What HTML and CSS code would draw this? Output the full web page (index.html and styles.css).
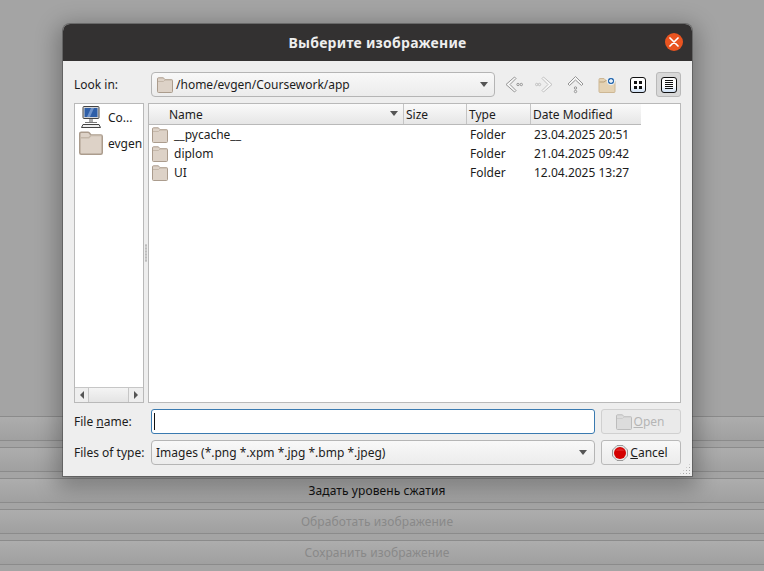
FILE: index.html
```html
<!DOCTYPE html>
<html lang="ru">
<head>
<meta charset="utf-8">
<title>Выберите изображение</title>
<link rel="stylesheet" href="styles.css">
</head>
<body>
<svg class="defs" width="0" height="0">
  <defs>
    <symbol id="folder" viewBox="0 0 16 16">
      <path d="M.5 3V14.500a1 1 0 0 0 1 1h13a1 1 0 0 0 1-1V3.600a1 1 0 0 0-1-1H8L6.800 1.200a1 1 0 0 0-.8-.4H1.500a1 1 0 0 0-1 1z" fill="#ddd2c7" stroke="#ab9c8d"/>
      <path d="M1 4.500H6.500L8 3h7" fill="none" stroke="#c4b7a9"/>
    </symbol>
  </defs>
</svg>
<main class="app">
  <div class="app-top"></div>
  <div class="app-btn"></div>
  <div class="app-btn"></div>
  <div class="app-btn active">Задать уровень сжатия</div>
  <div class="app-btn">Обработать изображение</div>
  <div class="app-btn">Сохранить изображение</div>
</main>
<section class="dialog">
  <header class="titlebar">
    <span class="title">Выберите изображение</span>
    <span class="close"><svg width="10" height="10" viewBox="0 0 10 10"><path d="M1 1l8 8M9 1l-8 8" stroke="#fff" stroke-width="1.700" stroke-linecap="round"/></svg></span>
  </header>
  <div class="body">
    <div class="row toolbar">
      <label class="lbl lookin">Look in:</label>
      <div class="combo path">
        <svg class="ico16" width="16" height="16"><use href="#folder"/></svg>
        <span class="combo-text">/home/evgen/Coursework/app</span>
        <span class="arrow"></span>
      </div>
      <div class="tools">
        <span class="tool"><svg width="20" height="20" viewBox="0 0 20 20" fill="none" stroke="#959595"><path d="M10.500 2L2 9.500l8.500 7.500 1.500-1.500L6 9.500l6-6z" fill="#f6f6f6"/><circle cx="14" cy="9.500" r="1.200"/><circle cx="17.300" cy="9.500" r="1.200"/></svg></span>
        <span class="tool"><svg width="20" height="20" viewBox="0 0 20 20" fill="none" stroke="#c0c0c0"><path d="M8.500 2L17 9.500 8.500 17 7 15.500l6-6-6-6z" fill="#f6f6f6"/><circle cx="4.500" cy="9.500" r="1.200"/><circle cx="1.700" cy="9.500" r="1.200"/></svg></span>
        <span class="tool"><svg width="20" height="20" viewBox="0 0 20 20" fill="none" stroke="#959595"><path d="M2 9L9.500 1.500 17 9l-1.500 1.500-6-5.500-6 5.500z" fill="#f6f6f6"/><circle cx="9.500" cy="13" r="1.200"/><circle cx="9.500" cy="16.500" r="1.200"/></svg></span>
        <span class="tool"><svg width="18" height="18" viewBox="0 0 18 18"><path d="M1 3.500a1 1 0 0 1 1-1h4l2 2h8a1 1 0 0 1 1 1v10a1 1 0 0 1-1 1h-14a1 1 0 0 1-1-1z" fill="#e4d2b3" stroke="#cdb794"/><path d="M1.500 6h4.500l2-1.500" fill="none" stroke="#b79f78"/><circle cx="13" cy="5" r="3.800" fill="#2b6cb0" stroke="#fff"/><path d="M13 3v4M11 5h4" stroke="#fff" stroke-width="1.300"/></svg></span>
        <span class="tool"><span class="view"><i></i><i></i><i></i><i></i></span></span>
        <span class="tool on"><span class="view list"><b></b><b></b><b></b><b></b><b></b></span></span>
      </div>
    </div>
    <div class="panes">
      <aside class="side">
        <div class="side-list">
          <div class="side-item">
            <svg width="24" height="24" viewBox="0 0 24 24"><rect x="4" y="1.500" width="16" height="12" rx="1" fill="#d6d6d6" stroke="#444"/><rect x="5.500" y="3" width="13" height="9" fill="#2f5fa8"/><path d="M8 12l4-9h3l-4 9z" fill="#6f94cc"/><rect x="10" y="14" width="4" height="3" fill="#aaa"/><rect x="6" y="17" width="12" height="1" fill="#777"/><path d="M2.500 22.500l1.500-3h16l1.500 3z" fill="#eee" stroke="#444"/></svg>
            <span>Co...</span>
          </div>
          <div class="side-item">
            <svg width="24" height="24"><use href="#folder"/></svg>
            <span>evgen</span>
          </div>
        </div>
        <div class="hscroll">
          <span class="sbtn"><em class="tri-l"></em></span>
          <span class="strack"></span>
          <span class="sbtn"><em class="tri-r"></em></span>
        </div>
      </aside>
      <div class="splitter"><span class="dots"></span></div>
      <div class="files">
        <div class="thead">
          <span class="th c-name">Name<em class="sort"></em></span>
          <span class="th c-size">Size</span>
          <span class="th c-type">Type</span>
          <span class="th c-date">Date Modified</span>
        </div>
        <div class="tr"><span class="c-name td"><svg width="16" height="16"><use href="#folder"/></svg>__pycache__</span><span class="c-size"></span><span class="c-type td">Folder</span><span class="c-date td">23.04.2025 20:51</span></div>
        <div class="tr"><span class="c-name td"><svg width="16" height="16"><use href="#folder"/></svg>diplom</span><span class="c-size"></span><span class="c-type td">Folder</span><span class="c-date td">21.04.2025 09:42</span></div>
        <div class="tr"><span class="c-name td"><svg width="16" height="16"><use href="#folder"/></svg>UI</span><span class="c-size"></span><span class="c-type td">Folder</span><span class="c-date td">12.04.2025 13:27</span></div>
      </div>
    </div>
    <div class="row r-name">
      <label class="lbl">File <u>n</u>ame:</label>
      <div class="input"><span class="caret"></span></div>
      <button class="btn disabled"><svg width="16" height="16"><use href="#folder"/></svg><span><u>O</u>pen</span></button>
    </div>
    <div class="row r-type">
      <label class="lbl">Files of type:</label>
      <div class="combo grad"><span class="combo-text">Images (*.png *.xpm *.jpg *.bmp *.jpeg)</span><span class="arrow"></span></div>
      <button class="btn"><svg width="16" height="16" viewBox="0 0 16 16"><path d="M5 .5h6L15.500 5v6L11 15.500H5L.5 11V5z" fill="#e8e8e8" stroke="#999"/><circle cx="8" cy="8" r="6" fill="#d40000"/><path d="M3.500 6a5 5 0 0 1 9 0z" fill="#e83a3a" opacity=".5"/></svg><span><u>C</u>ancel</span></button>
    </div>
    <span class="grip"></span>
  </div>
</section>
</body>
</html>
```
FILE: styles.css
```css
* { box-sizing: border-box; }
html, body { margin: 0; height: 100%; overflow: hidden; }
body { background: #a4a4a4; font-family: "Noto Sans", sans-serif; font-size: 12px; color: #1c1c1c; position: relative; }
.defs { position: absolute; }

.app { display: flex; flex-direction: column; gap: 6px; height: 571px; }
.app-top { height: 416px; margin-bottom: -6px; background: #a4a4a4; }
.app-btn {
  height: 25px; flex: none;
  border-top: 1px solid #8b8b8b; border-bottom: 1px solid #8b8b8b;
  background: linear-gradient(#adadad, #a0a0a0);
  display: flex; align-items: center; justify-content: center;
  padding-right: 10px; letter-spacing: .1px;
  color: #898989;
}
.app-btn.active { color: #111; }

.dialog {
  position: absolute; left: 63px; top: 24px; width: 629px; height: 452px;
  border-radius: 7px 7px 0 0; background: #eeeeee;
  display: flex; flex-direction: column;
  box-shadow: 0 0 0 1px rgba(60,60,60,.45), 0 6px 22px 6px rgba(0,0,0,.28);
}
.titlebar {
  height: 37px; flex: none; background: #333131; border-radius: 7px 7px 0 0;
  display: flex; align-items: center; justify-content: center; position: relative;
}
.title { color: #eeeeee; font-weight: 700; font-size: 14px; letter-spacing: .25px; }
.close {
  position: absolute; right: 9px; top: 9px; width: 18px; height: 18px; border-radius: 50%;
  background: #e95420; display: flex; align-items: center; justify-content: center;
}

.body { flex: 1; display: flex; flex-direction: column; padding: 11px 11px 0; position: relative; min-height: 0; }
.row { display: flex; align-items: center; }
.lbl { width: 77px; flex: none; }
.combo {
  height: 25px; border: 1px solid #b5b5b5; border-radius: 4px; background: linear-gradient(#f8f8f8, #ececec);
  display: flex; align-items: center; padding-left: 5px; position: relative;
}
.combo.path { width: 344px; flex: none; }
.combo.path .combo-text { margin-left: 3px; }
.combo.path .arrow { margin-right: 6px; }
.combo.grad { flex: 1; padding-left: 4px; }
.combo-text { flex: 1; white-space: nowrap; }
.arrow { width: 0; height: 0; border: 4px solid transparent; border-top: 5px solid #555; border-bottom: 0; margin-right: 7px; margin-left: 6px; }
.ico16 { flex: none; }

.tools { display: flex; margin-left: 6px; gap: 6px; }
.tool { width: 25px; height: 25px; display: flex; align-items: center; justify-content: center; border: 1px solid transparent; border-radius: 3px; }
.tool.on { background: #d8d8d8; border-color: #b9b9b9; }
.view { width: 16px; height: 16px; border: 1px solid #111; border-radius: 3px; background: linear-gradient(#fff 55%, #cfe0f4); display: grid; grid-template-columns: 3px 3px; grid-auto-rows: 3px; gap: 2px; place-content: center; }
.view i { background: #111; }
.view.list { display: flex; flex-direction: column; gap: 1px; padding: 2px 3px; justify-content: center; }
.view.list b { height: 1px; background: #111; display: block; }

.panes { display: flex; margin-top: 6px; height: 300px; flex: none; }
.side { width: 70px; flex: none; border: 1px solid #b9b9b9; background: #fff; display: flex; flex-direction: column; overflow: hidden; }
.side-list { flex: 1; overflow: hidden; }
.side-item { display: flex; align-items: center; height: 26px; padding-left: 4px; gap: 5px; white-space: nowrap; }
.side-item svg { flex: none; }
.hscroll { height: 15px; display: flex; border-top: 1px solid #c6c6c6; background: #eee; }
.sbtn { width: 14px; flex: none; display: flex; align-items: center; justify-content: center; border-right: 1px solid #c6c6c6; }
.sbtn:last-child { border-right: 0; border-left: 1px solid #c6c6c6; width: 15px; }
.strack { flex: 1; background: linear-gradient(#f4f4f4, #e4e4e4); }
.tri-l { border: 4px solid transparent; border-right: 4px solid #555; border-left: 0; }
.tri-r { border: 4px solid transparent; border-left: 4px solid #555; border-right: 0; }
.splitter { width: 4px; flex: none; display: flex; align-items: center; justify-content: center; }
.dots { width: 2px; height: 18px; background-image: radial-gradient(#bdbdbd .8px, transparent .9px); background-size: 2px 3px; }

.files { flex: 1; border: 1px solid #b9b9b9; background: #fff; min-width: 0; }
.thead { display: flex; height: 21px; border-bottom: 1px solid #b9b9b9; width: 492px; background: linear-gradient(#fafafa, #e6e6e6); }
.th { display: flex; align-items: center; border-right: 1px solid #c4c4c4; position: relative; padding-left: 2px; }
.th.c-name { padding-left: 20px; }
.th.c-date { border-right: 0; padding-left: 2px; }
.sort { position: absolute; right: 5px; top: 7px; border: 4px solid transparent; border-top: 5px solid #555; border-bottom: 0; }
.c-name { width: 255px; flex: none; }
.c-size { width: 63px; flex: none; }
.c-type { width: 64px; flex: none; }
.c-date { width: 110px; flex: none; }
.tr { display: flex; height: 19px; align-items: center; }
.td { display: flex; align-items: center; white-space: nowrap; }
.td.c-name { padding-left: 3px; gap: 6px; }
.td.c-type { padding-left: 3px; }
.td.c-date { padding-left: 3px; }

.r-name { margin-top: 6px; height: 25px; }
.r-type { margin-top: 6px; height: 25px; }
.input { flex: 1; height: 25px; border: 1px solid #3a7ab0; border-radius: 3px; background: #fff; display: flex; align-items: center; padding-left: 2px; }
.caret { width: 1px; height: 17px; background: #111; }
.btn {
  width: 80px; flex: none; height: 25px; margin-left: 6px; border: 1px solid #b9b9b9; border-radius: 3px;
  background: linear-gradient(#f8f8f8, #ececec); font: inherit; color: #1c1c1c; padding: 0 2px 0 0;
  display: flex; align-items: center; justify-content: center; gap: 2px;
}
.btn.disabled { color: #b5b5b5; border-color: #d0d0d0; background: #eaeaea; }
.btn.disabled svg { opacity: .6; filter: grayscale(1); }
.grip { position: absolute; right: 1px; bottom: 1px; width: 12px; height: 12px; background-image: radial-gradient(#a8a8a8 .7px, transparent .8px); background-size: 3px 3px; clip-path: polygon(100% 0, 100% 100%, 0 100%); }
```
